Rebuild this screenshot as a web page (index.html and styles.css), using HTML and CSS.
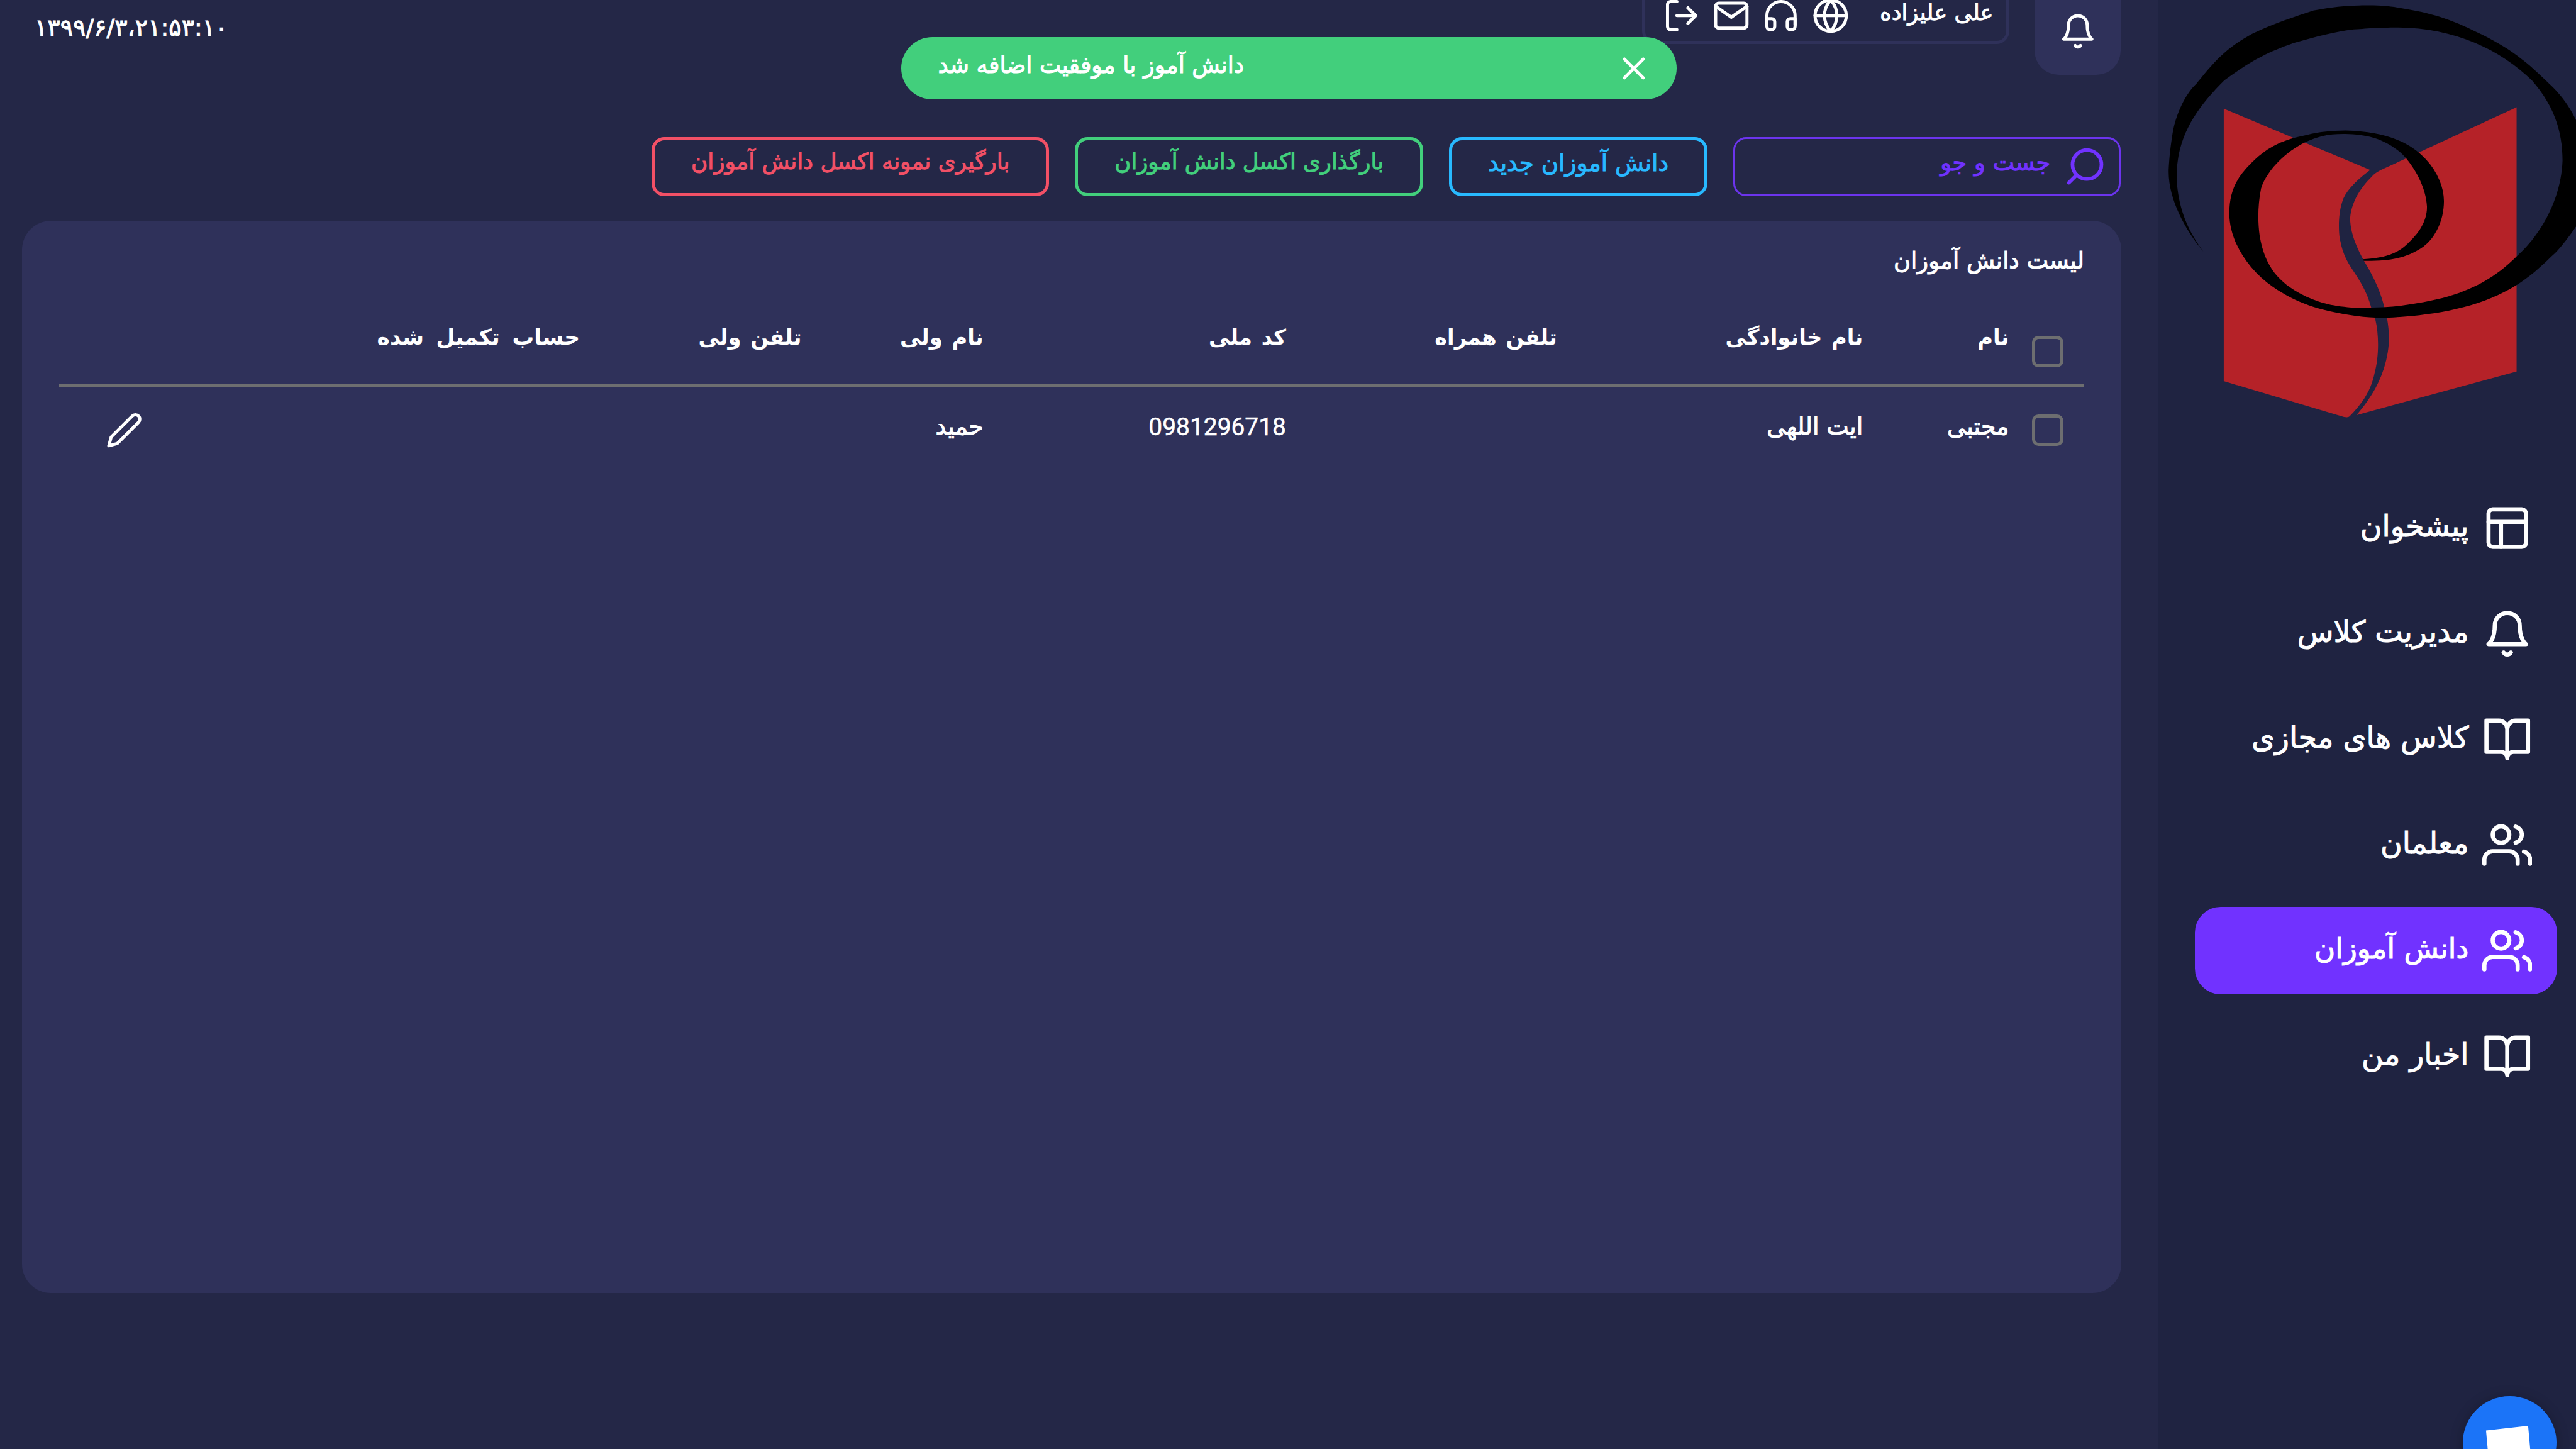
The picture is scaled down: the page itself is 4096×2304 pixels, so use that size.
FILE: index.html
```html
<!DOCTYPE html>
<html lang="fa" dir="rtl">
<head>
<meta charset="utf-8">
<title>لیست دانش آموزان</title>
<link rel="stylesheet" href="styles.css">
</head>
<body>
<svg class="sprite" aria-hidden="true">
  <symbol id="bell" viewBox="0 0 24 24"><path d="M18 8A6 6 0 0 0 6 8c0 7-3 9-3 9h18s-3-2-3-9M13.73 21a2 2 0 0 1-3.46 0"/></symbol>
  <symbol id="globe" viewBox="0 0 24 24"><circle cx="12" cy="12" r="10"/><path d="M2 12h20M12 2a15.3 15.3 0 0 1 4 10 15.3 15.3 0 0 1-4 10 15.3 15.3 0 0 1-4-10 15.3 15.3 0 0 1 4-10z"/></symbol>
  <symbol id="headphones" viewBox="0 0 24 24"><path d="M3 18v-6a9 9 0 0 1 18 0v6"/><path d="M21 19a2 2 0 0 1-2 2h-1a2 2 0 0 1-2-2v-3a2 2 0 0 1 2-2h3zM3 19a2 2 0 0 0 2 2h1a2 2 0 0 0 2-2v-3a2 2 0 0 0-2-2H3z"/></symbol>
  <symbol id="mail" viewBox="0 0 24 24"><path d="M4 4h16c1.1 0 2 .9 2 2v12c0 1.1-.9 2-2 2H4c-1.1 0-2-.9-2-2V6c0-1.1.9-2 2-2z"/><path d="M22 6l-10 7L2 6"/></symbol>
  <symbol id="logout" viewBox="0 0 24 24"><path d="M9 21H5a2 2 0 0 1-2-2V5a2 2 0 0 1 2-2h4M16 17l5-5-5-5M21 12H9"/></symbol>
  <symbol id="close" viewBox="0 0 24 24"><path d="M18 6L6 18M6 6l12 12"/></symbol>
  <symbol id="search" viewBox="0 0 24 24"><circle cx="13" cy="11" r="8"/><path d="M3 21l4.35-4.35"/></symbol>
  <symbol id="pencil" viewBox="0 0 24 24"><path d="M17 3a2.828 2.828 0 1 1 4 4L7.5 20.5 2 22l1.5-5.5L17 3z"/></symbol>
  <symbol id="layout" viewBox="0 0 24 24"><rect x="3" y="3" width="18" height="18" rx="2"/><path d="M3 9h18M9 21V9"/></symbol>
  <symbol id="book" viewBox="0 0 24 24"><path d="M2 3h6a4 4 0 0 1 4 4v14a3 3 0 0 0-3-3H2zM22 3h-6a4 4 0 0 0-4 4v14a3 3 0 0 1 3-3h7z"/></symbol>
  <symbol id="users" viewBox="0 0 24 24"><path d="M17 21v-2a4 4 0 0 0-4-4H5a4 4 0 0 0-4 4v2"/><circle cx="9" cy="7" r="4"/><path d="M23 21v-2a4 4 0 0 0-3-3.87M16 3.13a4 4 0 0 1 0 7.75"/></symbol>
</svg>

<aside class="sidebar">
  <svg class="logo" viewBox="66 0 1502 1568" preserveAspectRatio="none">
    <path class="logo-page" d="M303 392L829 613Q740 680 728 730C712 780 716 850 722 870C740 970 800 990 833 1110L847 1150C862 1210 860 1290 845 1345C830 1420 790 1465 755 1502Q750 1507 735 1504L303 1375Z"/>
    <path class="logo-page" d="M1355 387L870 612Q845 624 835 637C790 680 757 740 757 795C760 850 785 900 806 940C845 1005 865 1050 880 1108L890 1150C900 1210 900 1260 878 1330C855 1400 820 1450 780 1497L1355 1340Z"/>
    <path d="M230 908C165 830 105 720 105 620C105 590 112 520 122 465C145 370 185 320 205 302C260 235 300 180 405 122C480 85 560 60 625 38Q720 20 790 20C870 18 900 22 960 33C1060 50 1130 75 1210 115C1330 170 1400 230 1470 300C1530 355 1560 410 1580 460C1600 540 1610 740 1568 818C1540 860 1500 910 1480 925C1440 965 1400 1000 1355 1028C1240 1100 1100 1130 950 1142C880 1148 840 1147 780 1140C640 1120 560 1090 480 1035C380 965 323 860 323 770C323 690 350 640 400 590C460 530 510 505 600 487C650 475 690 472 740 471C830 473 900 490 950 515C1040 560 1094 650 1094 725C1094 800 1060 860 1020 890C960 930 910 942 806 941L803 935C870 932 910 920 945 895C1000 850 1034 800 1033 745C1030 670 980 590 940 552C880 500 820 485 740 483C680 482 640 492 595 513C520 550 455 620 437 680C425 740 425 800 432 850C450 960 500 1020 590 1065C650 1095 700 1105 775 1110C900 1110 960 1105 1090 1075C1200 1045 1280 1000 1355 925C1440 850 1515 720 1520 580C1520 460 1480 370 1410 290C1300 180 1130 100 930 99C860 99 830 102 770 106C700 115 640 130 555 155C440 195 380 235 305 290C200 395 130 500 134 650C140 740 165 820 230 908Z"/>
  </svg>
  <nav class="menu">
    <a class="menu-item"><svg class="icon"><use href="#layout"/></svg><span>پیشخوان</span></a>
    <a class="menu-item"><svg class="icon"><use href="#bell"/></svg><span>مدیریت کلاس</span></a>
    <a class="menu-item"><svg class="icon"><use href="#book"/></svg><span>کلاس های مجازی</span></a>
    <a class="menu-item"><svg class="icon"><use href="#users"/></svg><span>معلمان</span></a>
    <a class="menu-item active"><svg class="icon"><use href="#users"/></svg><span>دانش آموزان</span></a>
    <a class="menu-item"><svg class="icon"><use href="#book"/></svg><span>اخبار من</span></a>
  </nav>
</aside>

<main class="main">
  <header class="topbar">
    <div class="bell-box"><svg class="icon"><use href="#bell"/></svg></div>
    <div class="user-box">
      <span class="user-name">علی علیزاده</span>
      <svg class="icon"><use href="#globe"/></svg>
      <svg class="icon"><use href="#headphones"/></svg>
      <svg class="icon"><use href="#mail"/></svg>
      <svg class="icon"><use href="#logout"/></svg>
    </div>
    <time class="clock" dir="ltr">۱۳۹۹/۶/۳،‏۲۱:۵۳:۱۰</time>
  </header>

  <div class="toolbar">
    <div class="search"><svg class="icon"><use href="#search"/></svg><span>جست و جو</span></div>
    <button class="btn btn-new"><span>دانش آموزان جدید</span></button>
    <button class="btn btn-upload"><span>بارگذاری اکسل دانش آموزان</span></button>
    <button class="btn btn-sample"><span>بارگیری نمونه اکسل دانش آموزان</span></button>
  </div>

  <section class="panel">
    <h2 class="panel-title">لیست دانش آموزان</h2>
    <div class="row head">
      <i class="check"></i>
      <span>نام</span><span>نام خانوادگی</span><span>تلفن همراه</span><span>کد ملی</span><span>نام ولی</span><span>تلفن ولی</span><span class="col-done">حساب تکمیل شده</span>
    </div>
    <div class="row">
      <i class="check"></i>
      <span>مجتبی</span><span>ایت اللهی</span><span></span><span class="num">0981296718</span><span>حمید</span><span></span><span></span>
      <svg class="icon"><use href="#pencil"/></svg>
    </div>
  </section>
</main>

<div class="toast"><svg class="icon"><use href="#close"/></svg><span>دانش آموز با موفقیت اضافه شد</span></div>
<div class="chat"><svg viewBox="0 0 193 193"><path d="M48 71L135 61L142 140L55 148Z"/></svg></div>
</body>
</html>
```
FILE: styles.css
```css
/* 1rem = 10 layout units */
html { font-size: 25.6px; }
* { box-sizing: border-box; }
body {
  margin: 0;
  width: 4096px;
  height: 2304px;
  overflow: hidden;
  display: flex;
  position: relative;
  background: #242747;
  color: #fff;
  font: 1.42rem/2.4rem "DejaVu Sans", sans-serif;
  -webkit-text-stroke: 0.04rem;
  white-space: nowrap;
}
.sprite { position: absolute; width: 0; height: 0; }
.icon {
  width: 2.335rem;
  height: 2.335rem;
  flex: none;
  fill: none;
  stroke: currentColor;
  stroke-width: 2;
  stroke-linecap: round;
  stroke-linejoin: round;
}

.sidebar { width: 25.97rem; flex: none; background: #1f2341; }
.logo { display: block; width: 100%; height: 27rem; }
.logo-page { fill: #b52228; }
.menu { display: flex; flex-direction: column; gap: 1.14rem; padding: 3.1rem 1.19rem 0 2.3rem; }
.menu-item {
  display: flex;
  align-items: center;
  gap: 0.84rem;
  height: 5.42rem;
  padding-right: 1.53rem;
  border-radius: 1.6rem;
  font-size: 1.85rem;
}
.menu-item.active { background: #7132ff; font-size: 1.77rem; }
.menu-item .icon { width: 3.1rem; height: 3.1rem; }
.menu-item span { position: relative; top: -0.12rem; }

.main { flex: 1; display: flex; flex-direction: column; }
.topbar { display: flex; align-items: flex-start; height: 8.5rem; padding: 0 2.3rem 0 2.15rem; }
.bell-box {
  display: flex;
  justify-content: center;
  width: 5.37rem;
  height: 4.65rem;
  padding-top: 0.78rem;
  border-radius: 0 0 1.5rem 1.5rem;
  background: #2f315a;
}
.user-box {
  display: flex;
  align-items: flex-end;
  gap: 0.75rem;
  width: 22.8rem;
  height: 2.72rem;
  margin-right: 1.55rem;
  padding: 0 0.8rem 0.38rem 0;
  border: 0.2rem solid #2f315a;
  border-top: 0;
  border-radius: 0 0 0.8rem 0.8rem;
}
.user-name { width: 6.93rem; margin-left: 1.25rem; font-size: 1.38rem; line-height: 2.68rem; }
.clock { margin: 0.53rem auto 0 0; font-size: 1.48rem; }

.toolbar { display: flex; gap: 1.59rem; padding-right: 2.3rem; height: 5.2rem; }
.search {
  display: flex;
  align-items: center;
  gap: 0.8rem;
  width: 24.08rem;
  height: 3.67rem;
  padding-right: 0.76rem;
  border: 0.12rem solid #6c34ee;
  border-radius: 0.8rem;
  color: #7132ff;
  font-size: 1.44rem;
}
.search .icon { width: 2.7rem; height: 2.7rem; }
.search span { position: relative; top: -0.22rem; }
.btn {
  height: 3.67rem;
  padding: 0 0 0.58rem;
  border: 0.2rem solid;
  border-radius: 0.8rem;
  background: none;
  font: inherit;
  line-height: 2.4rem;
}
.btn-new { width: 16.06rem; color: #28b9ff; padding-bottom: 0.41rem; font-size: 1.46rem; }
.btn-upload { width: 21.65rem; color: #42cf7c; font-size: 1.385rem; }
.btn-sample { width: 24.7rem; color: #f25066; font-size: 1.4rem; }

.panel {
  width: 130.38rem;
  height: 66.6rem;
  margin-right: 2.28rem;
  padding: 1.2rem 2.3rem;
  border-radius: 1.8rem;
  background: #2f315a;
}
.panel-title { margin: 0; font: inherit; font-size: 1.44rem; line-height: 2.65rem; }
.row {
  display: grid;
  grid-template-columns: 4.67rem 9.07rem 19rem 16.83rem 18.8rem 11.3rem 13.76rem 27.12rem 1fr;
  padding-top: 1.28rem;
  font-size: 1.47rem;
}
.row.head {
  height: 6.48rem;
  padding-top: 2.21rem;
  border-bottom: 0.21rem solid #6d6e70;
  font-weight: bold;
  font-size: 1.32rem;
  word-spacing: 0.12rem;
  -webkit-text-stroke: 0;
}
.row.head .col-done { font-size: 1.35rem; word-spacing: 0.3rem; }
.row .icon { margin-top: 0.25rem; }
.check {
  width: 1.95rem;
  height: 1.95rem;
  margin: 0.43rem 1.29rem 0 0;
  border: 0.2rem solid #6d6e70;
  border-radius: 0.4rem;
}
.head .check { margin-top: 1.11rem; }
.num { font-family: Roboto, sans-serif; font-size: 1.52rem; -webkit-text-stroke: 0.02rem; }

.toast {
  position: absolute;
  left: 55.96rem;
  top: 2.31rem;
  width: 48.2rem;
  height: 3.88rem;
  display: flex;
  align-items: center;
  justify-content: space-between;
  padding: 0 1.52rem 0 2.3rem;
  border-radius: 1.94rem;
  background: #42cf7c;
}
.toast span { position: relative; top: -0.18rem; }
.chat {
  position: absolute;
  left: 152.97rem;
  top: 86.7rem;
  width: 5.8rem;
  height: 5.8rem;
  border-radius: 50%;
  background: #1b74f8;
  box-shadow: 0 0.1rem 0.8rem rgba(0, 0, 0, 0.25);
}
.chat svg { display: block; width: 100%; height: 100%; fill: #fff; }
```
